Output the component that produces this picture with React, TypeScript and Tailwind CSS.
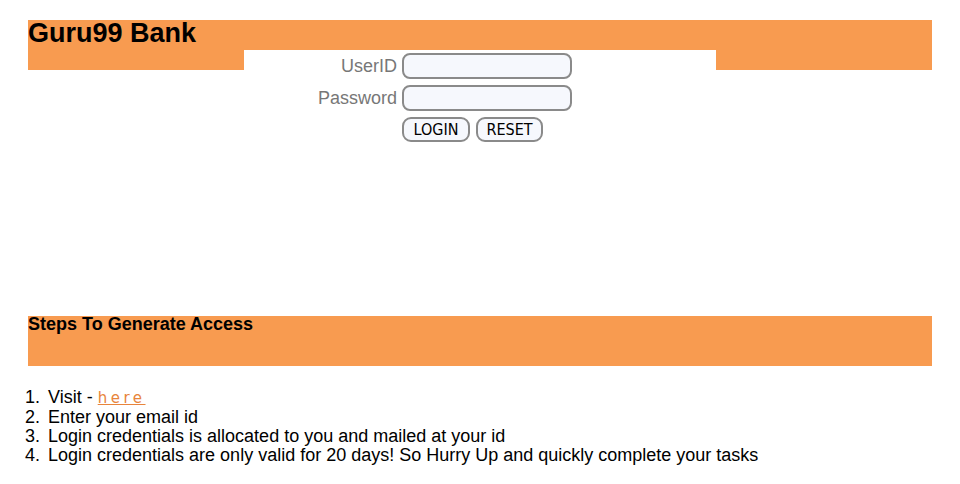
import React from "react";

export default function App() {
  const orange = "bg-[#f89b50]";
  const items = [
    null,
    "Enter your email id",
    "Login credentials is allocated to you and mailed at your id",
    "Login credentials are only valid for 20 days! So Hurry Up and quickly complete your tasks",
  ];
  return (
    <div className="w-[960px] h-[484px] bg-white overflow-hidden font-['Liberation_Sans',Arial,sans-serif] text-black pt-[20px]">
      <div className="px-[28px]">
        <div className={`h-[50px] ${orange} flex flex-col`}>
          <h2 className="text-[27px] font-bold leading-[26px]">Guru99 Bank</h2>
        </div>
        <div className="w-[472px] mx-auto -mt-[20px] bg-white pt-[3px] pb-[2px]">
          <div className="grid grid-cols-[158px_170px] gap-y-[5px]">
            <label className="text-[18px] text-[#777] text-right pr-[5px] leading-[27px]">UserID</label>
            <input className="h-[26px] w-[170px] rounded-[8px] border-2 border-[#8a8a8a] bg-[#f6f8fd] outline-none" />
            <label className="text-[18px] text-[#777] text-right pr-[5px] leading-[27px]">Password</label>
            <input type="password" className="h-[26px] w-[170px] rounded-[8px] border-2 border-[#8a8a8a] bg-[#f6f8fd] outline-none" />
            <div />
            <div className="flex gap-[6px]">
              <button className="h-[25px] w-[68px] rounded-[9px] border-2 border-[#8a8a8a] bg-[#f6f8fd] text-[16px] font-['DejaVu_Sans_Condensed','DejaVu_Sans',sans-serif] leading-none">LOGIN</button>
              <button className="h-[25px] w-[67px] rounded-[9px] border-2 border-[#8a8a8a] bg-[#f6f8fd] text-[16px] font-['DejaVu_Sans_Condensed','DejaVu_Sans',sans-serif] leading-none">RESET</button>
            </div>
          </div>
        </div>
        <div className={`mt-[172px] h-[50px] ${orange} flex flex-col`}>
          <h3 className="text-[18px] font-bold leading-[17px]">Steps To Generate Access</h3>
        </div>
      </div>
      <ol className="mt-[22px] text-[18px] leading-[19px]">
        {items.map((t, i) => (
          <li key={i} className="flex pl-[25px]">
            <span className="w-[23px] shrink-0">{i + 1}.</span>
            {t === null ? (
              <span>
                Visit -{" "}
                <a href="#" className="text-[#e8843c] underline font-['DejaVu_Sans',sans-serif] text-[15px] tracking-[3.5px]">here</a>
              </span>
            ) : (
              <span>{t}</span>
            )}
          </li>
        ))}
      </ol>
    </div>
  );
}
